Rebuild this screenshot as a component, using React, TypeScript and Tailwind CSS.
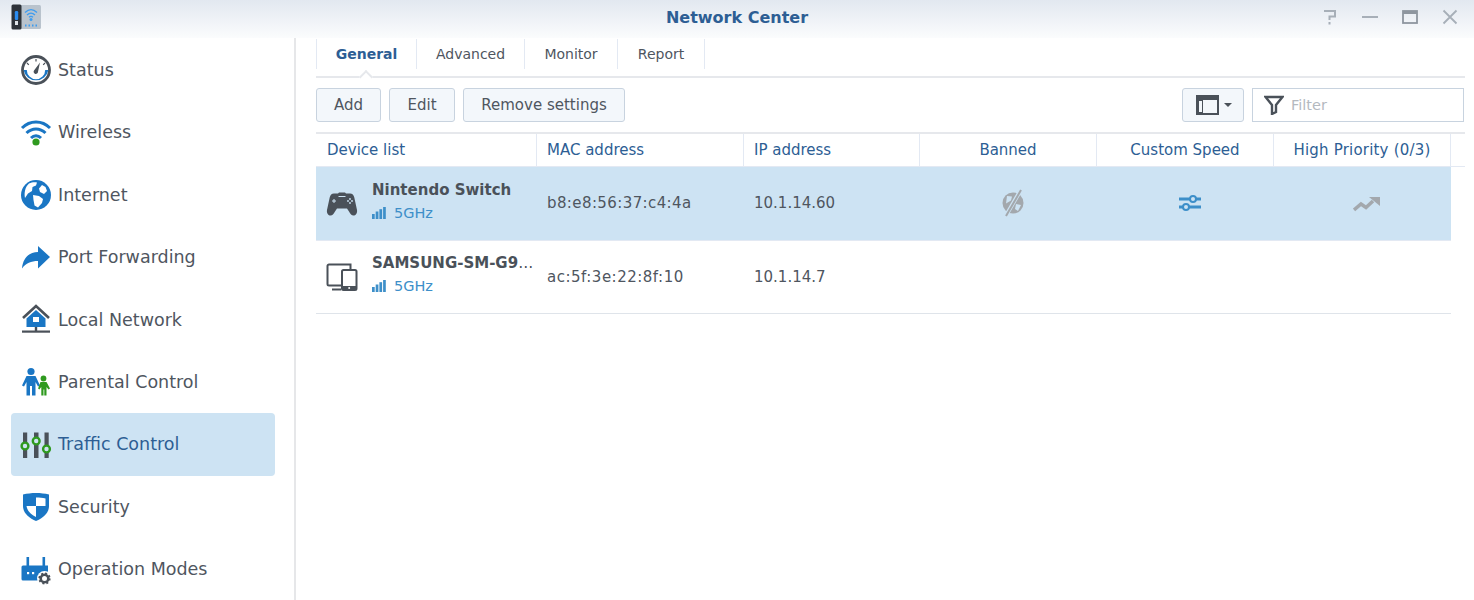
import React from 'react';

const Gray = '#4a5159';
const Blue = '#1a76c4';
const Green = '#2f9a1f';

const StatusIcon = () => (
  <svg width="32" height="32" viewBox="0 0 32 32">
    <circle cx="16" cy="16" r="13.500" fill="none" stroke={Gray} strokeWidth="2.800" />
    <path d="M3.600 16h3.200a9.200 9.200 0 0 0 18.400 0h3.200a12.600 12.600 0 0 1-24.800 0z" fill={Blue} />
    <path d="M20 8.500l-2 9.200a2.200 2.200 0 1 1-3.600-1.600z" fill={Gray} />
    <path d="M16 5v2.500M7 9l1.800 1.800M25 9l-1.800 1.800" stroke={Gray} strokeWidth="1.200" />
  </svg>
);

const WifiIcon = () => (
  <svg width="32" height="32" viewBox="0 0 32 32" fill="none" stroke={Blue} strokeWidth="3">
    <path d="M2 11C10 3 22 3 30 11" />
    <path d="M6.500 16C12 10.500 20 10.500 25.500 16" />
    <path d="M11 21C14 18 18 18 21 21" />
    <circle cx="16" cy="25" r="3.600" fill={Green} stroke="none" />
  </svg>
);

const GlobeIcon = () => (
  <svg width="32" height="32" viewBox="0 0 32 32">
    <circle cx="16" cy="16" r="15" fill={Blue} />
    <path d="M9 4.500c3-1.600 6-1.600 8-1l-1 3-3.500 1.500L12 12l-4 2.500-3 4.500c-1-5 0-11 4-14.500z" fill="#fff" />
    <path d="M22 6l3.500 2 1.500 4-3 3-4-2-1-3.500z" fill="#fff" />
    <path d="M13 16l6 1 4 3-1 4-4 4.500-3.500-2-1-5.500z" fill="#fff" />
  </svg>
);

const ForwardIcon = () => (
  <svg width="32" height="32" viewBox="0 0 32 32">
    <path d="M2 27.500C3 16 10 11 18 11V5l12 11-12 11.500V20c-7 0-12 2-16 7.500z" fill={Blue} />
  </svg>
);

const HomeIcon = () => (
  <svg width="32" height="32" viewBox="0 0 32 32">
    <path d="M3 14L16 2l13 12" fill="none" stroke={Gray} strokeWidth="2.600" />
    <path d="M6.500 14.500L16 6l9.500 8.500V23h-19z" fill={Blue} />
    <rect x="13" y="13" width="6" height="5" fill="#fff" />
    <rect x="14.800" y="23" width="2.400" height="4" fill={Gray} />
    <rect x="2" y="26.500" width="28" height="2.200" fill={Gray} />
  </svg>
);

const FamilyIcon = () => (
  <svg width="32" height="32" viewBox="0 0 32 32">
    <circle cx="11" cy="5.500" r="3.600" fill={Blue} />
    <path d="M6.500 10h9L20 19.500l-2 1-2.500-4.500V29.500h-3.500V20h-2v9.500H6.500V16L4 20.500l-2-1z" fill={Blue} />
    <circle cx="23.500" cy="12.500" r="2.900" fill={Green} />
    <path d="M20.500 16h6l3.500 6.500-1.500 1-2-2.500v8.500h-2.200v-6h-.8v6h-2.200V21l-2 2.500-1.200-1z" fill={Green} />
  </svg>
);

const SlidersIcon = () => (
  <svg width="32" height="32" viewBox="0 0 32 32">
    <g fill={Gray}>
      <rect x="3" y="3.500" width="4.200" height="25.500" />
      <rect x="14" y="3.500" width="4.500" height="25.500" />
      <rect x="24.500" y="3.500" width="4.200" height="25.500" />
    </g>
    <g fill="#cde3f3" stroke={Green} strokeWidth="2.400">
      <circle cx="5" cy="17" r="3.400" />
      <circle cx="16.200" cy="12" r="3.400" />
      <circle cx="26.500" cy="20" r="3.400" />
    </g>
  </svg>
);

const ShieldIcon = () => (
  <svg width="32" height="32" viewBox="0 0 32 32">
    <path d="M3 3.500C11 1.500 21 1.500 29 3.500V15c0 7-6 12-13 15C9 27 3 22 3 15z" fill={Blue} />
    <path d="M16 6.500c3.500 0 6.500.3 9.500 1V15H16zM16 15v11c-4-2-8.800-5.500-9.500-11z" fill="#fff" />
  </svg>
);

const RouterIcon = () => (
  <svg width="32" height="32" viewBox="0 0 32 32">
    <path d="M3 12.500h25v15H3a1.500 1.500 0 0 1-1.500-1.500V14A1.500 1.500 0 0 1 3 12.500z" fill={Blue} />
    <rect x="6.500" y="4" width="2.600" height="9" fill={Blue} />
    <rect x="22.500" y="4" width="2.600" height="9" fill={Blue} />
    <rect x="7" y="19" width="2.200" height="2.200" fill="#fff" />
    <rect x="12" y="19" width="2.200" height="2.200" fill="#fff" />
    <circle cx="24.500" cy="25.500" r="7.500" fill="#fff" />
    <circle cx="24.500" cy="25.500" r="3.800" fill="none" stroke={Gray} strokeWidth="2.600" />
    <circle cx="24.500" cy="25.500" r="5.200" fill="none" stroke={Gray} strokeWidth="1.800" strokeDasharray="2 2.080" />
  </svg>
);

const AppIcon = () => (
  <svg width="31" height="26" viewBox="0 0 31 26">
    <rect x="9" y="1" width="21" height="24" rx="1.500" fill="#b9c3cd" />
    <rect x="0.500" y="0.500" width="10" height="25" rx="1.500" fill="#2d3239" />
    <rect x="3.800" y="7" width="3.400" height="9" rx="1.200" fill="#2b8cf0" />
    <rect x="4" y="17" width="3" height="4" fill="#dfe3e8" />
    <g fill="none" stroke="#3d9cf0" strokeWidth="1.300">
      <path d="M14 8.500c3.800-3.600 8.200-3.600 12 0" />
      <path d="M16 11c2.600-2.400 5.400-2.400 8 0" />
      <path d="M18 13.200c1.400-1.200 2.600-1.200 4 0" />
    </g>
    <circle cx="20" cy="15.500" r="1.500" fill="#3d9cf0" />
    <path d="M14 21.500h1.500M17.500 21.500h1.500M21 21.500h1.500M24.500 21.500H26" stroke="#3d9cf0" strokeWidth="2" />
  </svg>
);

const GamepadIcon = () => (
  <svg width="32" height="26" viewBox="0 0 32 26">
    <path d="M8 2.500h4l1-1h6l1 1h4c2.500 0 3.500 1.500 4.300 4L31 19c.6 3.500-1.500 5.500-3.500 5.500-2 0-3-1.500-4.500-4l-2-3H11l-2 3c-1.500 2.500-2.500 4-4.500 4C2.500 24.500.4 22.500 1 19L3.700 6.500C4.500 4 5.500 2.500 8 2.500z" fill={Gray} />
    <path d="M12.500 5.500h7" stroke="#cde3f3" strokeWidth="1" />
    <path d="M8 8v4M6 10h4" stroke="#cde3f3" strokeWidth="1" />
    <circle cx="24" cy="8" r="0.900" fill="#cde3f3" />
    <circle cx="24" cy="12" r="0.900" fill="#cde3f3" />
    <circle cx="22" cy="10" r="0.900" fill="#cde3f3" />
    <circle cx="26" cy="10" r="0.900" fill="#cde3f3" />
  </svg>
);

const DevicesIcon = () => (
  <svg width="32" height="28" viewBox="0 0 32 28">
    <path d="M15 22.500H3a1.500 1.500 0 0 1-1.500-1.500V3A1.500 1.500 0 0 1 3 1.500h21.500V6" fill="none" stroke={Gray} strokeWidth="2" />
    <path d="M6 26.500h9" stroke={Gray} strokeWidth="2" />
    <rect x="16" y="7" width="14.500" height="20" rx="1.500" fill="#fff" stroke={Gray} strokeWidth="2" />
    <rect x="16" y="23" width="14.500" height="4" fill={Gray} />
    <circle cx="23.200" cy="25" r="1" fill="#fff" />
  </svg>
);

const Signal = () => (
  <svg width="14" height="12" viewBox="0 0 14 12" fill="#3d8fc9">
    <rect x="0" y="7" width="2.700" height="5" />
    <rect x="3.700" y="4.500" width="2.700" height="7.500" />
    <rect x="7.400" y="2.200" width="2.700" height="9.800" />
    <rect x="11.100" y="0" width="2.700" height="12" />
  </svg>
);

const nav = [
  { label: 'Status', icon: <StatusIcon /> },
  { label: 'Wireless', icon: <WifiIcon /> },
  { label: 'Internet', icon: <GlobeIcon /> },
  { label: 'Port Forwarding', icon: <ForwardIcon /> },
  { label: 'Local Network', icon: <HomeIcon /> },
  { label: 'Parental Control', icon: <FamilyIcon /> },
  { label: 'Traffic Control', icon: <SlidersIcon />, active: true },
  { label: 'Security', icon: <ShieldIcon /> },
  { label: 'Operation Modes', icon: <RouterIcon /> },
];

const tabs = ['General', 'Advanced', 'Monitor', 'Report'];
const tabWidths = ['w-[101px]', 'w-[108px]', 'w-[93px]', 'w-[87px]'];

const HeaderCell = ({ children, center }: { children: React.ReactNode; center?: boolean }) => (
  <div className={`flex items-center h-full border-r border-[#e3e9f3] ${center ? 'justify-center' : 'pl-[10px]'}`}>
    {children}
  </div>
);

const Device = ({ name, icon }: { name: React.ReactNode; icon: React.ReactNode }) => (
  <div className="flex items-center min-w-0 pl-[10px]">
    <div className="w-[32px] flex justify-center shrink-0">{icon}</div>
    <div className="ml-[14px] min-w-0 mt-[-5px]">
      <div className="text-[15px] leading-[22px] font-bold text-[#4a5159] whitespace-nowrap">{name}</div>
      <div className="flex items-center gap-[8px] mt-[1px] text-[14.500px] leading-[22px] text-[#3d8fc9]">
        <Signal />
        <span>5GHz</span>
      </div>
    </div>
  </div>
);

export default function App() {
  return (
    <div className="w-[1474px] h-[600px] overflow-hidden bg-white text-[#4f565f] font-['DejaVu_Sans','Liberation_Sans',sans-serif]">
      <header className="h-[38px] grid grid-cols-[1fr_auto_1fr] items-center bg-gradient-to-b from-[#e2e8f0] to-[#fbfcfd]">
        <div className="ml-[11px] mt-[-4px]"><AppIcon /></div>
        <div className="text-[16px] font-bold text-[#2d5e94] mt-[-2px]">Network Center</div>
        <div className="flex items-center justify-end gap-[20px] mr-[14px] mt-[-4px]">
          <svg width="20" height="20" viewBox="0 0 20 20" fill="none" stroke="#a7afb8" strokeWidth="2">
            <path d="M4 4h11v5.500H9.500V13" />
            <path d="M9.500 15v2.500" />
          </svg>
          <svg width="20" height="20" viewBox="0 0 20 20"><rect x="2" y="9" width="16" height="2" fill="#a7afb8" /></svg>
          <svg width="20" height="20" viewBox="0 0 20 20" fill="none">
            <rect x="3" y="4" width="14" height="12" stroke="#8e969f" strokeWidth="1.800" />
            <rect x="3" y="4" width="14" height="3" fill="#8e969f" />
          </svg>
          <svg width="20" height="20" viewBox="0 0 20 20" stroke="#a7afb8" strokeWidth="1.800">
            <path d="M3.500 3.500l13 13M16.500 3.500l-13 13" />
          </svg>
        </div>
      </header>

      <div className="flex h-[562px]">
        <aside className="w-[296px] shrink-0 pt-[1px] pl-[11px] border-r-2 border-[#e6e7e9] mr-[20px]">
          {nav.map((item) => (
            <div
              key={item.label}
              className={`flex items-center h-[62.400px] w-[264px] rounded-[4px] pl-[9px] ${item.active ? 'bg-[#cde3f3] text-[#2d5e94]' : ''}`}
            >
              <span className="w-[32px] flex justify-center shrink-0">{item.icon}</span>
              <span className="ml-[6px] text-[17.500px] whitespace-nowrap">{item.label}</span>
            </div>
          ))}
        </aside>

        <main className="flex-1 min-w-0 pr-[9px]">
          <div className="relative h-[40px] flex items-start border-b-2 border-[#e6e8ec]">
            {tabs.map((tab, i) => (
              <div
                key={tab}
                className={`h-[30px] mt-[1px] flex items-center justify-center text-[14px] border-r border-[#e3e9f3] ${tabWidths[i]} ${i === 0 ? 'border-l font-bold text-[#2d5e94]' : ''}`}
              >
                {tab}
              </div>
            ))}
            <div className="absolute left-[45px] bottom-[-6px] w-[10px] h-[10px] rotate-45 bg-white border-l-2 border-t-2 border-[#e6e8ec]" />
          </div>

          <div className="flex items-center h-[34px] mt-[10px] mr-[1px] text-[15px]">
            <button className="h-[34px] w-[65px] rounded-[3px] border border-[#c8d3df] bg-[#f3f7fb]">Add</button>
            <button className="h-[34px] w-[66px] ml-[8px] rounded-[3px] border border-[#c8d3df] bg-[#f3f7fb]">Edit</button>
            <button className="h-[34px] w-[162px] ml-[8px] rounded-[3px] border border-[#c8d3df] bg-[#f3f7fb]">Remove settings</button>
            <button className="h-[34px] w-[62px] ml-auto rounded-[3px] border border-[#c8d3df] bg-[#f3f7fb] flex items-center justify-center gap-[5px] pl-[2px]">
              <svg width="23" height="20" viewBox="0 0 23 20" fill="none">
                <rect x="1" y="1" width="21" height="18" stroke="#4a5159" strokeWidth="2" />
                <rect x="1" y="1" width="21" height="4" fill="#4a5159" />
                <rect x="1" y="1" width="6" height="18" fill="#4a5159" />
                <rect x="3" y="6" width="3" height="11" fill="#f3f7fb" />
              </svg>
              <svg width="8" height="4" viewBox="0 0 8 4"><path d="M0 0h8L4 4z" fill="#4a5159" /></svg>
            </button>
            <div className="h-[34px] w-[212px] ml-[8px] border border-[#c8d3df] bg-white flex items-center pl-[11px]">
              <svg width="20" height="20" viewBox="0 0 20 20" fill="none" stroke="#4a5159" strokeWidth="2.400">
                <path d="M1.500 2h17L12 10v7l-4 2v-9z" />
              </svg>
              <span className="ml-[7px] mt-[1px] text-[14.500px] text-[#b4b9bf]">Filter</span>
            </div>
          </div>

          <div className="mt-[10px] border-t-2 border-[#e6e8ec]">
            <div className="flex h-[33px] text-[15px] text-[#2d5e94] border-b border-[#e3e9f3]">
              <div className="grid grid-cols-[221px_207px_176px_177px_177px_177px] h-full">
                <div className="flex items-center h-full border-r border-[#e3e9f3] pl-[11px]">Device list</div>
                <HeaderCell>MAC address</HeaderCell>
                <HeaderCell>IP address</HeaderCell>
                <HeaderCell center>Banned</HeaderCell>
                <HeaderCell center>Custom Speed</HeaderCell>
                <HeaderCell center><span className="tracking-[0.2px]">High Priority (0/3)</span></HeaderCell>
              </div>
            </div>
            <div className="w-[1135px] grid grid-cols-[221px_207px_176px_177px_177px_177px] h-[74px] items-center bg-[#cde3f3] text-[15px] border-b border-[#e3e9f3]">
              <Device name="Nintendo Switch" icon={<GamepadIcon />} />
              <div className="pl-[10px] tracking-[0.4px]">b8:e8:56:37:c4:4a</div>
              <div className="pl-[10px]">10.1.14.60</div>
              <div className="flex justify-center pl-[8px] mt-[-1px]">
                <svg width="24" height="28" viewBox="0 0 24 28">
                  <circle cx="12" cy="14" r="10.500" fill="#a3a8ad" />
                  <path d="M6 7l5 .5-1 4-5 3zM15 15l5 1-3 6-3-2z" fill="#cde3f3" />
                  <path d="M19.500 1.500L5 26.500" stroke="#cde3f3" strokeWidth="4" />
                  <path d="M20 1L5 27" stroke="#a3a8ad" strokeWidth="2" />
                </svg>
              </div>
              <div className="flex justify-center pl-[8px] mt-[-1px]">
                <svg width="24" height="20" viewBox="0 0 24 20" fill="none">
                  <path d="M1 6h22M1 14h22" stroke="#3d8fc9" strokeWidth="3" />
                  <circle cx="15" cy="6" r="3" fill="#cde3f3" stroke="#3d8fc9" strokeWidth="2" />
                  <circle cx="8" cy="14" r="3" fill="#cde3f3" stroke="#3d8fc9" strokeWidth="2" />
                </svg>
              </div>
              <div className="flex justify-center pl-[8px]">
                <svg width="27" height="16" viewBox="0 0 27 16">
                  <path d="M1 14l7-6 5 3.500L20 5" fill="none" stroke="#a3a8ad" strokeWidth="3.500" />
                  <path d="M16 1h11v9z" fill="#a3a8ad" />
                </svg>
              </div>
            </div>
            <div className="w-[1135px] grid grid-cols-[221px_207px_176px_177px_177px_177px] h-[73px] items-center text-[15px] border-b border-[#dfe4ea]">
              <Device name={<>SAMSUNG-SM-G9<span className="font-normal tracking-[-0.5px]">…</span></>} icon={<DevicesIcon />} />
              <div className="pl-[10px] tracking-[0.5px]">ac:5f:3e:22:8f:10</div>
              <div className="pl-[10px]">10.1.14.7</div>
            </div>
          </div>
        </main>
      </div>
    </div>
  );
}
